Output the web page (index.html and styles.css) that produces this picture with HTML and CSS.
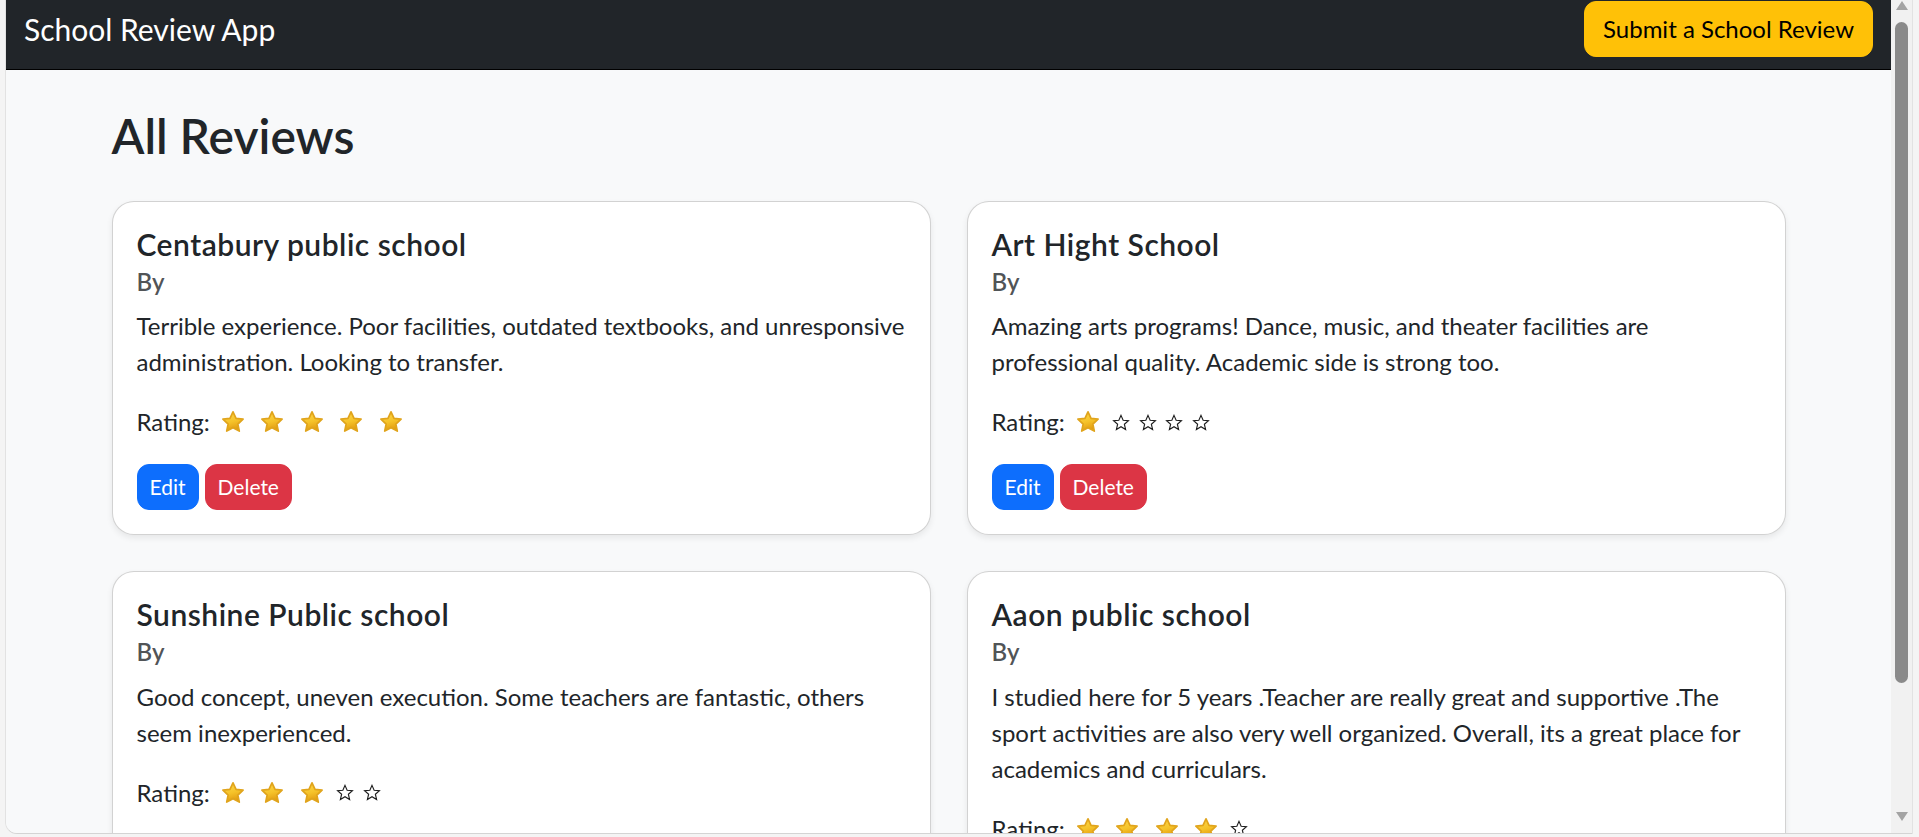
FILE: index.html
```html
<!DOCTYPE html>
<html lang="en">
<head>
<meta charset="utf-8">
<title>School Review App</title>
<link rel="stylesheet" href="styles.css">
</head>
<body>
<div class="window">
  <div class="viewport">
    <div class="page">
      <nav class="navbar">
        <span class="brand">School Review App</span>
        <button class="btn-submit">Submit a School Review</button>
      </nav>
      <main class="container">
        <h2 class="page-title">All Reviews</h2>
        <div class="grid">
          <div class="card">
            <h5 class="card-title">Centabury public school</h5>
            <h6 class="card-subtitle">By</h6>
            <p class="card-text">Terrible experience. Poor facilities, outdated textbooks, and unresponsive administration. Looking to transfer.</p>
            <div class="rating">Rating:<span class="stars">
              <span class="star-full"><svg viewBox="0 0 24 24"><use href="#sf"/></svg></span>
              <span class="star-full"><svg viewBox="0 0 24 24"><use href="#sf"/></svg></span>
              <span class="star-full"><svg viewBox="0 0 24 24"><use href="#sf"/></svg></span>
              <span class="star-full"><svg viewBox="0 0 24 24"><use href="#sf"/></svg></span>
              <span class="star-full"><svg viewBox="0 0 24 24"><use href="#sf"/></svg></span>
            </span></div>
            <div class="actions"><button class="btn btn-edit">Edit</button><button class="btn btn-delete">Delete</button></div>
          </div>
          <div class="card">
            <h5 class="card-title">Art Hight School</h5>
            <h6 class="card-subtitle">By</h6>
            <p class="card-text">Amazing arts programs! Dance, music, and theater facilities are professional quality. Academic side is strong too.</p>
            <div class="rating">Rating:<span class="stars">
              <span class="star-full"><svg viewBox="0 0 24 24"><use href="#sf"/></svg></span>
              <span class="star-empty"><svg viewBox="0 0 16 16"><use href="#se"/></svg></span>
              <span class="star-empty"><svg viewBox="0 0 16 16"><use href="#se"/></svg></span>
              <span class="star-empty"><svg viewBox="0 0 16 16"><use href="#se"/></svg></span>
              <span class="star-empty"><svg viewBox="0 0 16 16"><use href="#se"/></svg></span>
            </span></div>
            <div class="actions"><button class="btn btn-edit">Edit</button><button class="btn btn-delete">Delete</button></div>
          </div>
          <div class="card">
            <h5 class="card-title">Sunshine Public school</h5>
            <h6 class="card-subtitle">By</h6>
            <p class="card-text">Good concept, uneven execution. Some teachers are fantastic, others seem inexperienced.</p>
            <div class="rating">Rating:<span class="stars">
              <span class="star-full"><svg viewBox="0 0 24 24"><use href="#sf"/></svg></span>
              <span class="star-full"><svg viewBox="0 0 24 24"><use href="#sf"/></svg></span>
              <span class="star-full"><svg viewBox="0 0 24 24"><use href="#sf"/></svg></span>
              <span class="star-empty"><svg viewBox="0 0 16 16"><use href="#se"/></svg></span>
              <span class="star-empty"><svg viewBox="0 0 16 16"><use href="#se"/></svg></span>
            </span></div>
            <div class="actions"><button class="btn btn-edit">Edit</button><button class="btn btn-delete">Delete</button></div>
          </div>
          <div class="card">
            <h5 class="card-title">Aaon public school</h5>
            <h6 class="card-subtitle">By</h6>
            <p class="card-text">I studied here for 5 years .Teacher are really great and supportive .The sport activities are also very well organized. Overall, its a great place for academics and curriculars.</p>
            <div class="rating">Rating:<span class="stars">
              <span class="star-full"><svg viewBox="0 0 24 24"><use href="#sf"/></svg></span>
              <span class="star-full"><svg viewBox="0 0 24 24"><use href="#sf"/></svg></span>
              <span class="star-full"><svg viewBox="0 0 24 24"><use href="#sf"/></svg></span>
              <span class="star-full"><svg viewBox="0 0 24 24"><use href="#sf"/></svg></span>
              <span class="star-empty"><svg viewBox="0 0 16 16"><use href="#se"/></svg></span>
            </span></div>
            <div class="actions"><button class="btn btn-edit">Edit</button><button class="btn btn-delete">Delete</button></div>
          </div>
        </div>
      </main>
    </div>
    <div class="scrollbar">
      <span class="sb-up"></span>
      <span class="sb-thumb"></span>
      <span class="sb-spacer"></span>
      <span class="sb-down"></span>
    </div>
  </div>
</div>
<svg class="defs" width="0" height="0" aria-hidden="true">
  <defs>
    <linearGradient id="gold" x1="0" y1="0" x2="0.3" y2="1">
      <stop offset="0" stop-color="#ffdc4f"/>
      <stop offset="0.6" stop-color="#f5c229"/>
      <stop offset="1" stop-color="#e39d12"/>
    </linearGradient>
    <path id="sf" d="M12 2.6l2.8 6 6.5.8-4.8 4.5 1.3 6.5L12 17.2l-5.8 3.2 1.3-6.5-4.8-4.5 6.5-.8z" fill="url(#gold)" stroke="#e0a41c" stroke-width="1.6" stroke-linejoin="round"/>
    <path id="se" d="M8 1.2l1.9 4.4 4.7.4-3.6 3.1 1.1 4.7L8 11.3l-4.1 2.5 1.1-4.7L1.4 6l4.7-.4z" fill="#fff" stroke="#1d1d1d" stroke-width="1" stroke-linejoin="miter"/>
  </defs>
</svg>
</body>
</html>
```

FILE: styles.css
```css
html, body {
  margin: 0;
  height: 837px;
  overflow: hidden;
}

body {
  background: #f4f4f4;
  font-family: Lato, "Noto Sans", "Liberation Sans", sans-serif;
  color: #212529;
}

.defs {
  position: absolute;
  width: 0;
  height: 0;
}

.window {
  height: 837px;
  box-sizing: border-box;
  padding: 0 6px 3px 5px;
  display: flex;
}

.viewport {
  flex: 1;
  display: flex;
  min-width: 0;
  overflow: hidden;
  border-left: 1px solid #e2e2e2;
  border-right: 1px solid #e2e2e2;
  border-bottom: 1px solid #d4d4d4;
  border-bottom-left-radius: 12px;
}

.page {
  flex: 1;
  min-width: 0;
  background: #f8f9fa;
  overflow: hidden;
}

.navbar {
  background: #212529;
  display: flex;
  justify-content: space-between;
  align-items: center;
  padding: 1px 18px 12px;
  border-bottom: 1px solid #000;
}

.brand {
  color: #fff;
  font-size: 30px;
  line-height: 45px;
}

.btn-submit {
  font-family: inherit;
  font-size: 24px;
  line-height: 36px;
  padding: 9px 18px;
  background: #ffc107;
  border: 1px solid #ffc107;
  border-radius: 12px;
  color: #000;
}

.container {
  width: 1710px;
  box-sizing: border-box;
  margin: 0 auto;
  padding: 0 18px;
}

.page-title {
  font-size: 48px;
  line-height: 1.2;
  font-weight: 600;
  margin: 37px 0 36px;
}

.grid {
  display: grid;
  grid-template-columns: 1fr 1fr;
  gap: 36px;
}

.card {
  background: #fff;
  border: 1px solid rgba(0, 0, 0, 0.175);
  border-radius: 22px;
  box-shadow: 0 3px 6px rgba(0, 0, 0, 0.075);
  padding: 24px;
}

.card-title {
  font-size: 30px;
  line-height: 36px;
  font-weight: 600;
  letter-spacing: 0.5px;
  margin: 0 0 6px;
}

.card-subtitle {
  font-size: 24px;
  line-height: 28.8px;
  font-weight: 600;
  color: rgba(33, 37, 41, 0.78);
  margin: 0 0 12px;
}

.card-text {
  font-size: 24px;
  line-height: 36px;
  margin: 0 0 24px;
}

.rating {
  display: flex;
  align-items: center;
  font-size: 24px;
  line-height: 36px;
  margin-bottom: 24px;
}

.stars {
  display: inline-flex;
  align-items: center;
  gap: 6.5px;
  margin-left: 6.5px;
}

.star-full {
  width: 33px;
  height: 36px;
  display: inline-flex;
  align-items: center;
  justify-content: center;
}

.star-full svg {
  width: 26px;
  height: 26px;
}

.star-empty {
  width: 20.2px;
  height: 36px;
  display: inline-flex;
  align-items: center;
  justify-content: center;
}

.star-empty svg {
  width: 18px;
  height: 18px;
  margin-top: 1px;
}

.actions {
  display: flex;
  gap: 6px;
}

.btn {
  font-family: inherit;
  font-size: 21px;
  line-height: 31.5px;
  padding: 6px 12px;
  border-radius: 12px;
  color: #fff;
}

.btn-edit {
  background: #0d6efd;
  border: 1px solid #0d6efd;
}

.btn-delete {
  background: #dc3545;
  border: 1px solid #dc3545;
}

.scrollbar {
  width: 21px;
  background: #f1f1f1;
  display: flex;
  flex-direction: column;
  align-items: center;
}

.sb-up {
  width: 0;
  height: 0;
  border-left: 6.5px solid transparent;
  border-right: 6.5px solid transparent;
  border-bottom: 9px solid #a3a3a3;
  margin-top: 1px;
}

.sb-thumb {
  width: 13px;
  height: 661px;
  margin-top: 12px;
  border-radius: 7px;
  background: #8a8a8a;
}

.sb-spacer {
  flex: 1;
}

.sb-down {
  width: 0;
  height: 0;
  border-left: 6.5px solid transparent;
  border-right: 6.5px solid transparent;
  border-top: 9px solid #a3a3a3;
  margin-bottom: 12px;
}
```
